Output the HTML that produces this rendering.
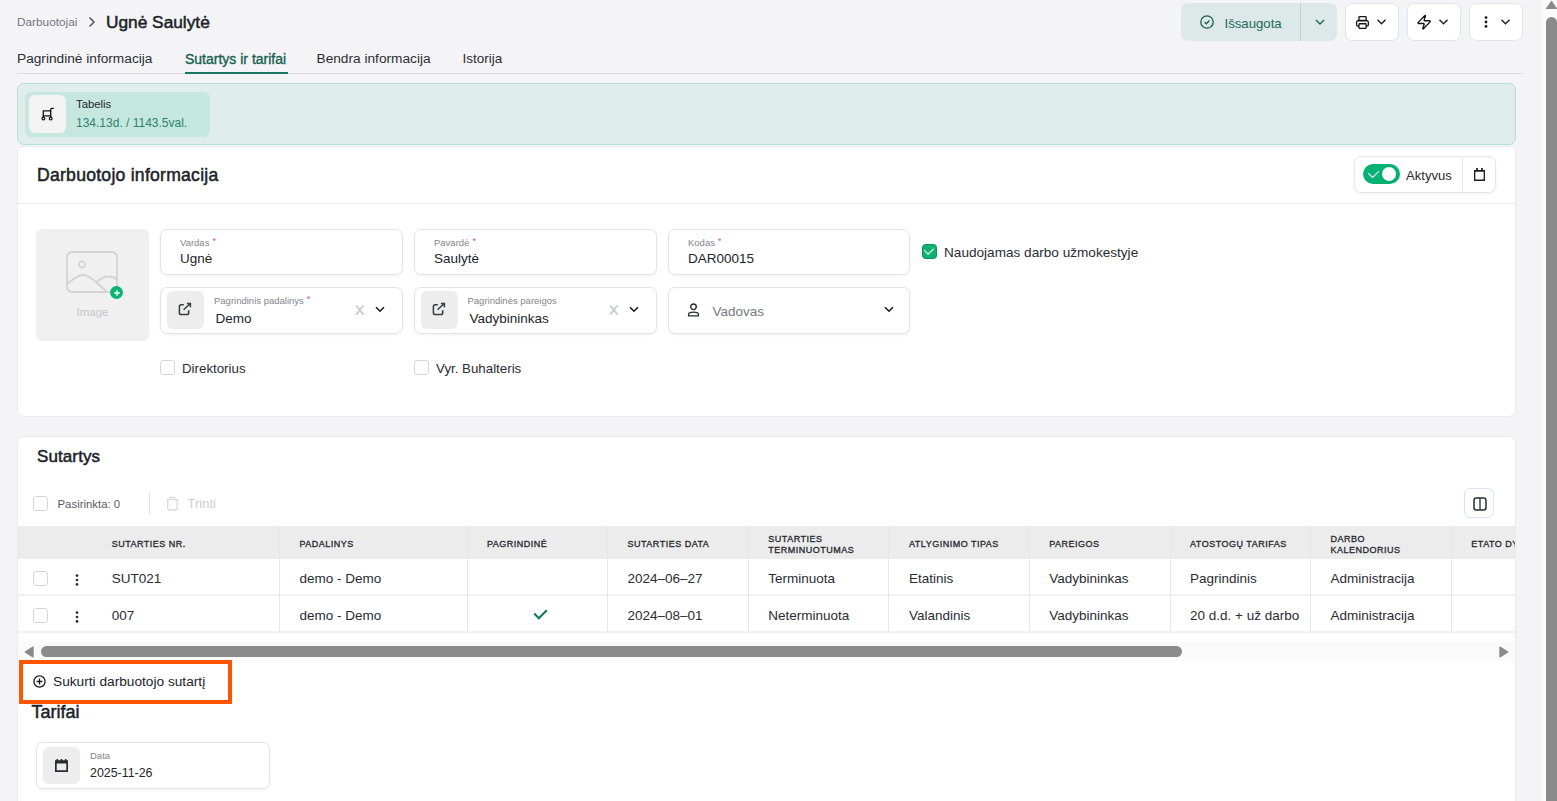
<!DOCTYPE html>
<html><head><meta charset="utf-8">
<style>
*{box-sizing:border-box;margin:0;padding:0}
html,body{width:1557px;height:801px;overflow:hidden;background:#f4f4f7;font-family:"Liberation Sans",sans-serif;color:#23252b}
.a{position:absolute}
.t{position:absolute;white-space:nowrap;line-height:1}
svg{position:absolute;overflow:visible}
.card{position:absolute;background:#fff;border:1px solid #ebebef;border-radius:7px}
.fld{position:absolute;background:#fff;border:1px solid #e4e4e6;border-radius:7px;box-shadow:0 1px 3px rgba(0,0,0,0.06)}
.ibox{position:absolute;background:#ededed;border-radius:6px}
.lbl{position:absolute;white-space:nowrap;line-height:1;font-size:9.5px;color:#85858c}
.lbl i{font-style:normal;color:#e0457b;margin-left:3px;font-size:9px;position:relative;top:-2px}
.val{position:absolute;white-space:nowrap;line-height:1;font-size:13.5px;color:#23252b}
.cb{position:absolute;width:15px;height:15px;border:1px solid #d6d6d8;border-radius:3px;background:#fff}
.hbtn{position:absolute;top:3px;width:54px;height:38px;background:#fff;border:1px solid #dfe5ef;border-radius:7px}
.th{position:absolute;white-space:nowrap;line-height:10.5px;font-size:9px;font-weight:400;letter-spacing:0.5px;color:#26282d;-webkit-text-stroke:0.3px #26282d}
.td{position:absolute;white-space:nowrap;line-height:1;font-size:13.5px;color:#2a2c31}
.vl{position:absolute;width:1px;background:#e7e7e8}
</style></head><body>

<!-- breadcrumb -->
<div class="t" style="left:17px;top:17px;font-size:11.8px;color:#74767c">Darbuotojai</div>
<svg style="left:88px;top:16px" width="8" height="12" viewBox="0 0 8 12"><path d="M1.5 1.5 L6 6 L1.5 10.5" fill="none" stroke="#55575c" stroke-width="1.5"/></svg>
<div class="t" style="left:106px;top:14.2px;font-size:17.3px;font-weight:400;-webkit-text-stroke:0.5px #202228;color:#202228">Ugnė Saulytė</div>

<!-- tabs -->
<div class="t" style="left:17px;top:52px;font-size:13.7px;color:#2b2d33">Pagrindinė informacija</div>
<div class="t" style="left:185px;top:52px;font-size:14px;color:#16614e;-webkit-text-stroke:0.35px #16614e">Sutartys ir tarifai</div>
<div class="t" style="left:316.5px;top:52px;font-size:13.7px;color:#2b2d33">Bendra informacija</div>
<div class="t" style="left:462.5px;top:52px;font-size:13.5px;color:#2b2d33">Istorija</div>
<div class="a" style="left:17px;top:73px;width:1506px;height:1px;background:#dcdce1"></div>
<div class="a" style="left:185px;top:72px;width:103px;height:2px;background:#187a5d"></div>

<!-- header buttons -->
<div class="a" style="left:1181px;top:3px;width:156px;height:38px;background:#dde9e8;border-radius:7px"></div>
<div class="a" style="left:1300px;top:3px;width:1px;height:38px;background:#b9d2cd"></div>
<svg style="left:1200px;top:15px" width="14" height="14" viewBox="0 0 14 14"><circle cx="7" cy="7" r="6.2" fill="none" stroke="#17614e" stroke-width="1.3"/><path d="M4.6 7.2 L6.3 8.8 L9.4 5.6" fill="none" stroke="#17614e" stroke-width="1.4"/></svg>
<div class="t" style="left:1224.5px;top:16.5px;font-size:13.2px;color:#1c6a56">Išsaugota</div>
<svg style="left:1315px;top:19px" width="10" height="6" viewBox="0 0 10 6"><path d="M1 1 L5 5 L9 1" fill="none" stroke="#17614e" stroke-width="1.3"/></svg>

<div class="hbtn" style="left:1345px"></div>
<svg style="left:1355px;top:15px" width="15" height="15" viewBox="0 0 15 15"><rect x="3.95" y="1.55" width="7.2" height="3.9" rx="0.7" fill="none" stroke="#141418" stroke-width="1.3"/><path d="M3.9 11.15 H2.9 A1.35 1.35 0 0 1 1.55 9.8 V7.1 A1.35 1.35 0 0 1 2.9 5.75 H12 A1.35 1.35 0 0 1 13.35 7.1 V9.8 A1.35 1.35 0 0 1 12 11.15 H11.2" fill="none" stroke="#141418" stroke-width="1.3"/><rect x="3.95" y="8.75" width="7.2" height="4.6" rx="0.7" fill="none" stroke="#141418" stroke-width="1.3"/></svg>
<svg style="left:1377px;top:19px" width="9" height="6" viewBox="0 0 9 6"><path d="M0.5 0.8 L4.5 4.8 L8.5 0.8" fill="none" stroke="#1b1b1f" stroke-width="1.3"/></svg>

<div class="hbtn" style="left:1407px"></div>
<svg style="left:1416.2px;top:14.4px" width="16.3" height="16.3" viewBox="0 0 24 24"><path d="M4 14a1 1 0 0 1-.78-1.63l9.9-10.2a.5.5 0 0 1 .86.46l-1.92 6.02A1 1 0 0 0 13 10h7a1 1 0 0 1 .78 1.63l-9.9 10.2a.5.5 0 0 1-.86-.46l1.92-6.02A1 1 0 0 0 11 14z" fill="none" stroke="#141418" stroke-width="2" stroke-linejoin="round"/></svg>
<svg style="left:1439px;top:19px" width="9" height="6" viewBox="0 0 9 6"><path d="M0.5 0.8 L4.5 4.8 L8.5 0.8" fill="none" stroke="#1b1b1f" stroke-width="1.3"/></svg>

<div class="hbtn" style="left:1469px"></div>
<svg style="left:1484px;top:16px" width="4" height="12" viewBox="0 0 4 12"><circle cx="2" cy="1.6" r="1.4" fill="#1b1b1f"/><circle cx="2" cy="6" r="1.4" fill="#1b1b1f"/><circle cx="2" cy="10.4" r="1.4" fill="#1b1b1f"/></svg>
<svg style="left:1501px;top:19px" width="9" height="6" viewBox="0 0 9 6"><path d="M0.5 0.8 L4.5 4.8 L8.5 0.8" fill="none" stroke="#1b1b1f" stroke-width="1.3"/></svg>

<!-- banner -->
<div class="a" style="left:17px;top:83px;width:1499px;height:62px;background:#dfeeea;border:1px solid #b2e0d3;border-radius:7px"></div>
<div class="a" style="left:25px;top:92px;width:185px;height:45px;background:#c6e7dd;border-radius:6px"></div>
<div class="a" style="left:29px;top:95px;width:37px;height:38px;background:#f3f3f4;border-radius:6px"></div>
<svg style="left:40px;top:106px" width="16" height="16" viewBox="0 0 16 16"><path d="M3.3 11.6 V4.8 H10.7 M3.3 9.9 H10.7 M10.7 11.6 V3.5 Q10.7 2.4 11.8 2.4 H13.8" fill="none" stroke="#141418" stroke-width="1.35"/><circle cx="3.4" cy="12.5" r="1.4" fill="#f4f4f5" stroke="#141418" stroke-width="1.2"/><circle cx="10.7" cy="12.5" r="1.4" fill="#f4f4f5" stroke="#141418" stroke-width="1.2"/></svg>
<div class="t" style="left:76px;top:98.5px;font-size:11.3px;color:#23252b">Tabelis</div>
<div class="t" style="left:76px;top:117px;font-size:12px;color:#2a8470">134.13d. / 1143.5val.</div>

<!-- card 1 -->
<div class="card" style="left:17px;top:146px;width:1499px;height:271px"></div>
<div class="a" style="left:18px;top:203px;width:1497px;height:1px;background:#e8e8eb"></div>
<div class="t" style="left:37px;top:166.6px;font-size:17.6px;font-weight:400;letter-spacing:0.25px;-webkit-text-stroke:0.5px #202228;color:#202228">Darbuotojo informacija</div>


<!-- toggle group -->
<div class="a" style="left:1353.5px;top:156px;width:142px;height:37px;background:#fff;border:1px solid #e6e6e8;border-radius:7px;box-shadow:0 1px 3px rgba(0,0,0,0.06)"></div>
<div class="a" style="left:1462px;top:157px;width:1px;height:34px;background:#e6e6e8"></div>
<div class="a" style="left:1363px;top:164px;width:37px;height:20px;background:#04b273;border-radius:10px"></div>
<div class="a" style="left:1382px;top:167px;width:14px;height:14px;background:#fff;border-radius:50%;box-shadow:0 1px 1px rgba(0,0,0,0.12)"></div>
<svg style="left:1363px;top:164px" width="20" height="20" viewBox="0 0 20 20"><path d="M5.2 9.2 L9.6 13.4 L16 7.2" fill="none" stroke="#fff" stroke-width="1.05"/></svg>
<div class="t" style="left:1406px;top:168.5px;font-size:13.1px;color:#2a2c31">Aktyvus</div>
<svg style="left:1474px;top:168px" width="11" height="13" viewBox="0 0 11 13"><path fill-rule="evenodd" fill="#1e1f23" d="M0 2 H11 V12.9 H0 Z M1.35 3.8 V11.6 H9.65 V3.8 Z"/><rect x="2.2" y="0" width="1.7" height="2.2" fill="#1e1f23"/><rect x="7.1" y="0" width="1.7" height="2.2" fill="#1e1f23"/></svg>

<!-- image box -->
<div class="a" style="left:36px;top:229px;width:113px;height:112px;background:#f0f0f0;border-radius:6px"></div>
<svg style="left:66px;top:251px" width="52" height="42" viewBox="0 0 52 42"><rect x="1" y="1" width="50" height="40" rx="5" fill="none" stroke="#d3d3d3" stroke-width="1.8"/><circle cx="16" cy="13.5" r="3" fill="none" stroke="#d3d3d3" stroke-width="1.6"/><path d="M1 33 C7 28 12 24 17 24 C22 24 25 27 30 31 L40.5 40.5 M30.5 31 C35 27 39 25.5 43 25.5 C46 25.5 49 26.5 51 28.5" fill="none" stroke="#d3d3d3" stroke-width="1.8"/></svg>
<div class="a" style="left:109.8px;top:285.8px;width:13.4px;height:13.4px;background:#0db371;border-radius:50%"></div>
<svg style="left:112.5px;top:288.5px" width="8" height="8" viewBox="0 0 8 8"><path d="M4 1.2 V6.8 M1.2 4 H6.8" stroke="#fff" stroke-width="1.4"/></svg>
<div class="t" style="left:76.5px;top:306.5px;font-size:11.5px;color:#c5c5c8">Image</div>

<!-- row 1 fields -->
<div class="fld" style="left:160px;top:229px;width:243px;height:46px"></div>
<div class="lbl" style="left:180px;top:238px">Vardas<i>*</i></div>
<div class="val" style="left:180px;top:252px">Ugnė</div>
<div class="fld" style="left:414px;top:229px;width:243px;height:46px"></div>
<div class="lbl" style="left:434px;top:238px">Pavardė<i>*</i></div>
<div class="val" style="left:434px;top:252px">Saulytė</div>
<div class="fld" style="left:668px;top:229px;width:242px;height:46px"></div>
<div class="lbl" style="left:688px;top:238px">Kodas<i>*</i></div>
<div class="val" style="left:688px;top:252px">DAR00015</div>

<div class="a" style="left:922px;top:244px;width:15px;height:15px;background:#0db371;border:1px solid #0b9060;border-radius:3.5px"></div>
<svg style="left:922px;top:244px" width="15" height="15" viewBox="0 0 15 15"><path d="M2.3 6.4 L6.1 10.2 L11.6 4.9" fill="none" stroke="#fff" stroke-width="1.1"/></svg>
<div class="t" style="left:944px;top:245.5px;font-size:13.6px;color:#2a2c31">Naudojamas darbo užmokestyje</div>

<!-- row 2 fields -->
<div class="fld" style="left:160px;top:287px;width:243px;height:46.5px"></div>
<div class="ibox" style="left:167px;top:291px;width:37px;height:38px"></div>
<svg style="left:178px;top:302px" width="14" height="14" viewBox="0 0 14 14"><path d="M5.8 2.8 H3.2 A1.8 1.8 0 0 0 1.4 4.6 V10.7 A1.8 1.8 0 0 0 3.2 12.5 H8.9 A1.8 1.8 0 0 0 10.7 10.7 V8.3" fill="none" stroke="#3c3e43" stroke-width="1.55"/><path d="M5.6 7.8 L12.2 1.5 M8.9 1.5 H12.4 V5.2" fill="none" stroke="#3c3e43" stroke-width="1.55"/></svg>
<div class="lbl" style="left:214px;top:295.5px">Pagrindinis padalinys<i>*</i></div>
<div class="val" style="left:215.5px;top:311.5px">Demo</div>
<svg style="left:354.5px;top:305px" width="10" height="10" viewBox="0 0 10 10"><path d="M1.6 0.9 L8.1 9.1 M8.1 0.9 L1.6 9.1" stroke="#c6ced3" stroke-width="1.8" stroke-linecap="round"/></svg>
<svg style="left:375px;top:306px" width="10" height="7" viewBox="0 0 10 7"><path d="M1 1.2 L5 5.2 L9 1.2" fill="none" stroke="#1b1b1f" stroke-width="1.6"/></svg>

<div class="fld" style="left:414px;top:287px;width:243px;height:46.5px"></div>
<div class="ibox" style="left:421px;top:291px;width:37px;height:38px"></div>
<svg style="left:432px;top:302px" width="14" height="14" viewBox="0 0 14 14"><path d="M5.8 2.8 H3.2 A1.8 1.8 0 0 0 1.4 4.6 V10.7 A1.8 1.8 0 0 0 3.2 12.5 H8.9 A1.8 1.8 0 0 0 10.7 10.7 V8.3" fill="none" stroke="#3c3e43" stroke-width="1.55"/><path d="M5.6 7.8 L12.2 1.5 M8.9 1.5 H12.4 V5.2" fill="none" stroke="#3c3e43" stroke-width="1.55"/></svg>
<div class="lbl" style="left:467.5px;top:295.5px">Pagrindinės pareigos</div>
<div class="val" style="left:469.5px;top:311.5px">Vadybininkas</div>
<svg style="left:608.5px;top:305px" width="10" height="10" viewBox="0 0 10 10"><path d="M1.6 0.9 L8.1 9.1 M8.1 0.9 L1.6 9.1" stroke="#c6ced3" stroke-width="1.8" stroke-linecap="round"/></svg>
<svg style="left:629px;top:306px" width="10" height="7" viewBox="0 0 10 7"><path d="M1 1.2 L5 5.2 L9 1.2" fill="none" stroke="#1b1b1f" stroke-width="1.6"/></svg>

<div class="fld" style="left:668px;top:287px;width:242px;height:46.5px"></div>
<svg style="left:687px;top:303px" width="13" height="14" viewBox="0 0 13 14"><circle cx="6.5" cy="3.8" r="2.8" fill="none" stroke="#2a2c31" stroke-width="1.4"/><path d="M1.6 12.9 V11.3 Q1.6 9.1 6.5 9.1 Q11.4 9.1 11.4 11.3 V12.9 Z" fill="none" stroke="#2a2c31" stroke-width="1.35" stroke-linejoin="round"/></svg>
<div class="t" style="left:712.5px;top:304.5px;font-size:13.5px;color:#77787e">Vadovas</div>
<svg style="left:883.5px;top:305.5px" width="10" height="7" viewBox="0 0 10 7"><path d="M1 1.2 L5 5.2 L9 1.2" fill="none" stroke="#1b1b1f" stroke-width="1.6"/></svg>

<!-- checkboxes -->
<div class="cb" style="left:160px;top:360px"></div>
<div class="t" style="left:182px;top:361.7px;font-size:13.3px;color:#2a2c31">Direktorius</div>
<div class="cb" style="left:414px;top:360px"></div>
<div class="t" style="left:436px;top:361.7px;font-size:13.3px;color:#2a2c31">Vyr. Buhalteris</div>


<!-- card 2 -->
<div class="card" style="left:17px;top:436px;width:1499px;height:420px"></div>
<div class="t" style="left:37px;top:447.6px;font-size:17px;font-weight:400;letter-spacing:0.1px;-webkit-text-stroke:0.5px #202228;color:#202228">Sutartys</div>
<div class="cb" style="left:33px;top:496px"></div>
<div class="t" style="left:57.5px;top:498.6px;font-size:11.4px;color:#595b61">Pasirinkta: 0</div>
<div class="a" style="left:149px;top:492px;width:1px;height:22px;background:#e2e2e4"></div>
<svg style="left:165px;top:496px" width="15" height="16" viewBox="0 0 15 16"><path d="M1.3 3.6 H13.8 M4.8 3.6 V1.9 Q4.8 1.3 5.4 1.3 H9.4 Q10 1.3 10 1.9 V3.6 M2.7 3.6 V12 Q2.7 14 4.7 14 H10.1 Q12.1 14 12.1 12 V3.6" fill="none" stroke="#dcdcde" stroke-width="1.3"/></svg>
<div class="t" style="left:187.5px;top:497.3px;font-size:13px;color:#cdcdd0">Trinti</div>
<div class="a" style="left:1464px;top:488px;width:30px;height:30px;background:#fff;border:1px solid #dde4ee;border-radius:6px"></div>
<svg style="left:1472.5px;top:496.5px" width="14" height="14" viewBox="0 0 14 14"><rect x="1" y="1" width="12" height="12" rx="2.2" fill="none" stroke="#2a2c31" stroke-width="1.5"/><path d="M7 1 V13" stroke="#2a2c31" stroke-width="1.3"/></svg>

<!-- table -->
<div class="a" style="left:18px;top:526px;width:1497px;height:33px;background:#ececed"></div>
<div class="a" style="left:18px;top:594px;width:1497px;height:1.5px;background:#f1f1f2"></div>
<div class="a" style="left:18px;top:631px;width:1497px;height:1.5px;background:#f1f1f2"></div>
<div class="vl" style="left:279px;top:526px;height:106px"></div>
<div class="vl" style="left:467px;top:526px;height:106px"></div>
<div class="vl" style="left:607px;top:526px;height:106px"></div>
<div class="vl" style="left:748px;top:526px;height:106px"></div>
<div class="vl" style="left:888px;top:526px;height:106px"></div>
<div class="vl" style="left:1029px;top:526px;height:106px"></div>
<div class="vl" style="left:1170px;top:526px;height:106px"></div>
<div class="vl" style="left:1310px;top:526px;height:106px"></div>
<div class="vl" style="left:1451px;top:526px;height:106px"></div>
<div class="th" style="left:111.7px;top:538.6px">SUTARTIES NR.</div>
<div class="th" style="left:299.5px;top:538.6px">PADALINYS</div>
<div class="th" style="left:487px;top:538.6px">PAGRINDINĖ</div>
<div class="th" style="left:627.5px;top:538.6px">SUTARTIES DATA</div>
<div class="th" style="left:768.3px;top:534.4px">SUTARTIES<br>TERMINUOTUMAS</div>
<div class="th" style="left:909px;top:538.6px">ATLYGINIMO TIPAS</div>
<div class="th" style="left:1049.2px;top:538.6px">PAREIGOS</div>
<div class="th" style="left:1190px;top:538.6px">ATOSTOGŲ TARIFAS</div>
<div class="th" style="left:1330.4px;top:534.4px">DARBO<br>KALENDORIUS</div>
<div class="a" style="left:1452px;top:526px;width:63px;height:33px;overflow:hidden"><div class="th" style="left:19.3px;top:12.6px">ETATO DYDIS</div></div>
<div class="cb" style="left:33px;top:571px"></div>
<svg style="left:75px;top:573.5px" width="4" height="12" viewBox="0 0 4 12"><circle cx="2" cy="1.6" r="1.35" fill="#2a2c31"/><circle cx="2" cy="6" r="1.35" fill="#2a2c31"/><circle cx="2" cy="10.4" r="1.35" fill="#2a2c31"/></svg>
<div class="td" style="left:111.7px;top:571.6px">SUT021</div>
<div class="td" style="left:299.5px;top:571.6px">demo - Demo</div>
<div class="td" style="left:627.5px;top:571.6px">2024–06–27</div>
<div class="td" style="left:768.3px;top:571.6px">Terminuota</div>
<div class="td" style="left:909px;top:571.6px">Etatinis</div>
<div class="td" style="left:1049.2px;top:571.6px">Vadybininkas</div>
<div class="td" style="left:1190px;top:571.6px">Pagrindinis</div>
<div class="td" style="left:1330.4px;top:571.6px">Administracija</div>
<div class="cb" style="left:33px;top:608px"></div>
<svg style="left:75px;top:610.5px" width="4" height="12" viewBox="0 0 4 12"><circle cx="2" cy="1.6" r="1.35" fill="#2a2c31"/><circle cx="2" cy="6" r="1.35" fill="#2a2c31"/><circle cx="2" cy="10.4" r="1.35" fill="#2a2c31"/></svg>
<div class="td" style="left:111.7px;top:608.7px">007</div>
<div class="td" style="left:299.5px;top:608.7px">demo - Demo</div>
<div class="td" style="left:627.5px;top:608.7px">2024–08–01</div>
<div class="td" style="left:768.3px;top:608.7px">Neterminuota</div>
<div class="td" style="left:909px;top:608.7px">Valandinis</div>
<div class="td" style="left:1049.2px;top:608.7px">Vadybininkas</div>
<div class="td" style="left:1190px;top:608.7px">20 d.d. + už darbo</div>
<div class="td" style="left:1330.4px;top:608.7px">Administracija</div>
<svg style="left:533px;top:609px" width="15" height="11" viewBox="0 0 15 11"><path d="M1.2 4.6 L5.8 9.2 L13.8 1.2" fill="none" stroke="#0f7a58" stroke-width="2.1"/></svg>

<!-- horizontal scrollbar -->
<div class="a" style="left:18px;top:642px;width:1497px;height:18.5px;background:#fafafa"></div>
<svg style="left:23.5px;top:645.5px" width="10" height="12" viewBox="0 0 10 12"><path d="M9 1.2 V10.8 L1.2 6 Z" fill="#8a8a8a" stroke="#8a8a8a" stroke-width="1.4" stroke-linejoin="round"/></svg>
<div class="a" style="left:41px;top:645.5px;width:1141px;height:11.5px;background:#8a8a8a;border-radius:6px"></div>
<svg style="left:1499px;top:645.5px" width="10" height="12" viewBox="0 0 10 12"><path d="M1 1.2 V10.8 L8.8 6 Z" fill="#8a8a8a" stroke="#8a8a8a" stroke-width="1.4" stroke-linejoin="round"/></svg>

<!-- orange highlight -->
<div class="a" style="left:19px;top:660px;width:213px;height:44px;border:4px solid #ff5500"></div>
<svg style="left:32.5px;top:674.5px" width="13" height="13" viewBox="0 0 13 13"><circle cx="6.5" cy="6.5" r="5.6" fill="none" stroke="#1b1b1f" stroke-width="1.3"/><path d="M6.5 3.6 V9.4 M3.6 6.5 H9.4" stroke="#1b1b1f" stroke-width="1.3"/></svg>
<div class="t" style="left:53px;top:675.3px;font-size:13.7px;color:#202228">Sukurti darbuotojo sutartį</div>

<!-- tarifai -->
<div class="t" style="left:31.5px;top:702.8px;font-size:18px;font-weight:400;-webkit-text-stroke:0.5px #202228;color:#202228">Tarifai</div>
<div class="fld" style="left:36px;top:742px;width:233.5px;height:46.5px"></div>
<div class="ibox" style="left:43px;top:747px;width:37px;height:37px"></div>
<svg style="left:55px;top:759px" width="13" height="13" viewBox="0 0 13 13"><path fill-rule="evenodd" fill="#2a2c31" d="M0 1.2 H13 V13 H0 Z M1.7 4.6 V11.2 H11.3 V4.6 Z"/><circle cx="2.3" cy="1.2" r="1.1" fill="#2a2c31"/><circle cx="6.5" cy="1.2" r="1.1" fill="#2a2c31"/><circle cx="10.7" cy="1.2" r="1.1" fill="#2a2c31"/></svg>
<div class="lbl" style="left:90px;top:751px">Data</div>
<div class="val" style="left:90px;top:766.5px;font-size:12.4px">2025-11-26</div>

<!-- vertical scrollbar -->
<div class="a" style="left:1542px;top:0;width:15px;height:801px;background:#fbfbfb"></div>
<svg style="left:1545px;top:0" width="13" height="10" viewBox="0 0 13 10"><path d="M6.5 0.5 L12.5 9 H0.5 Z" fill="#8a8a8a"/></svg>
<div class="a" style="left:1546px;top:17px;width:11px;height:800px;background:#8a8a8a;border-radius:5.5px 5.5px 0 0"></div>

</body></html>
